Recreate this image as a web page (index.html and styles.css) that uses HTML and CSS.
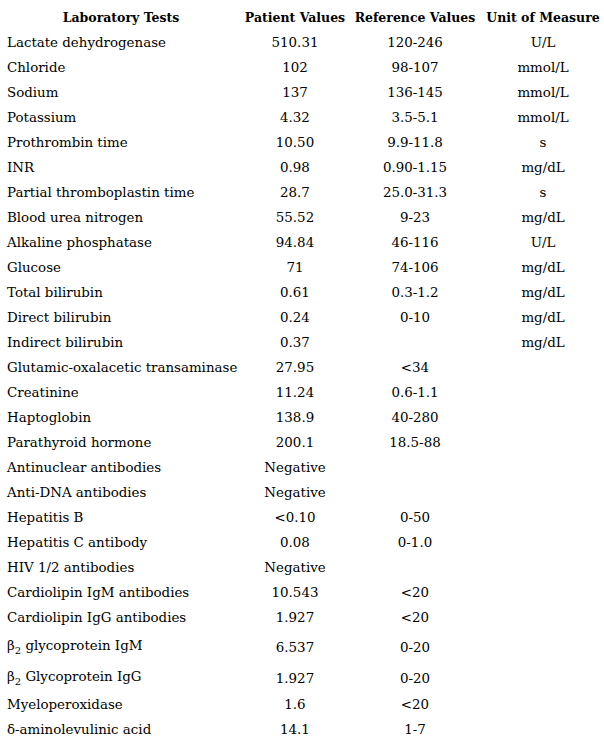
FILE: index.html
```html
<!DOCTYPE html>
<html>
<head>
<meta charset="utf-8">
<link rel="stylesheet" href="styles.css">
</head>
<body>
<table class="labs">
<colgroup><col class="c1"><col class="c2"><col class="c3"><col class="c4"></colgroup>
<thead>
<tr><th class="name-h">Laboratory Tests</th><th>Patient Values</th><th>Reference Values</th><th>Unit of Measure</th></tr>
</thead>
<tbody>
<tr><td class="name">Lactate dehydrogenase</td><td>510.31</td><td>120-246</td><td>U/L</td></tr>
<tr><td class="name">Chloride</td><td>102</td><td>98-107</td><td>mmol/L</td></tr>
<tr><td class="name">Sodium</td><td>137</td><td>136-145</td><td>mmol/L</td></tr>
<tr><td class="name">Potassium</td><td>4.32</td><td>3.5-5.1</td><td>mmol/L</td></tr>
<tr><td class="name">Prothrombin time</td><td>10.50</td><td>9.9-11.8</td><td>s</td></tr>
<tr><td class="name">INR</td><td>0.98</td><td>0.90-1.15</td><td>mg/dL</td></tr>
<tr><td class="name">Partial thromboplastin time</td><td>28.7</td><td>25.0-31.3</td><td>s</td></tr>
<tr><td class="name">Blood urea nitrogen</td><td>55.52</td><td>9-23</td><td>mg/dL</td></tr>
<tr><td class="name">Alkaline phosphatase</td><td>94.84</td><td>46-116</td><td>U/L</td></tr>
<tr><td class="name">Glucose</td><td>71</td><td>74-106</td><td>mg/dL</td></tr>
<tr><td class="name">Total bilirubin</td><td>0.61</td><td>0.3-1.2</td><td>mg/dL</td></tr>
<tr><td class="name">Direct bilirubin</td><td>0.24</td><td>0-10</td><td>mg/dL</td></tr>
<tr><td class="name">Indirect bilirubin</td><td>0.37</td><td></td><td>mg/dL</td></tr>
<tr><td class="name">Glutamic-oxalacetic transaminase</td><td>27.95</td><td>&lt;34</td><td></td></tr>
<tr><td class="name">Creatinine</td><td>11.24</td><td>0.6-1.1</td><td></td></tr>
<tr><td class="name">Haptoglobin</td><td>138.9</td><td>40-280</td><td></td></tr>
<tr><td class="name">Parathyroid hormone</td><td>200.1</td><td>18.5-88</td><td></td></tr>
<tr><td class="name">Antinuclear antibodies</td><td>Negative</td><td></td><td></td></tr>
<tr><td class="name">Anti-DNA antibodies</td><td>Negative</td><td></td><td></td></tr>
<tr><td class="name">Hepatitis B</td><td>&lt;0.10</td><td>0-50</td><td></td></tr>
<tr><td class="name">Hepatitis C antibody</td><td>0.08</td><td>0-1.0</td><td></td></tr>
<tr><td class="name">HIV 1/2 antibodies</td><td>Negative</td><td></td><td></td></tr>
<tr><td class="name">Cardiolipin IgM antibodies</td><td>10.543</td><td>&lt;20</td><td></td></tr>
<tr><td class="name">Cardiolipin IgG antibodies</td><td>1.927</td><td>&lt;20</td><td></td></tr>
<tr class="tall"><td class="name">β<sub>2</sub> glycoprotein IgM</td><td>6.537</td><td>0-20</td><td></td></tr>
<tr class="tall"><td class="name">β<sub>2</sub> Glycoprotein IgG</td><td>1.927</td><td>0-20</td><td></td></tr>
<tr><td class="name">Myeloperoxidase</td><td>1.6</td><td>&lt;20</td><td></td></tr>
<tr><td class="name">δ-aminolevulinic acid</td><td>14.1</td><td>1-7</td><td></td></tr>
</tbody>
</table>
</body>
</html>
```
FILE: styles.css
```css
html, body {
  margin: 0;
  padding: 0;
  background: #fff;
}
body {
  padding: 5px 0 0 0;
  font-family: "DejaVu Serif", serif;
  font-size: 13.4px;
  color: #000;
}
.labs {
  border-collapse: collapse;
  table-layout: fixed;
  width: 604px;
}
.c1 { width: 242px; }
.c2 { width: 106px; }
.c3 { width: 134px; }
.c4 { width: 122px; }
.labs th, .labs td {
  height: 25px;
  padding: 0;
  text-align: center;
  vertical-align: middle;
  white-space: nowrap;
  font-weight: normal;
}
.labs th {
  font-weight: bold;
  font-size: 12.5px;
}
.labs td.name {
  text-align: left;
  padding-left: 7px;
}
.labs tr.tall td {
  height: 28px;
  padding-top: 3px;
}
.labs tr.tall td.name {
  padding-top: 0;
}
.labs sub {
  font-size: 10px;
  line-height: 0;
  vertical-align: -4px;
}
```
